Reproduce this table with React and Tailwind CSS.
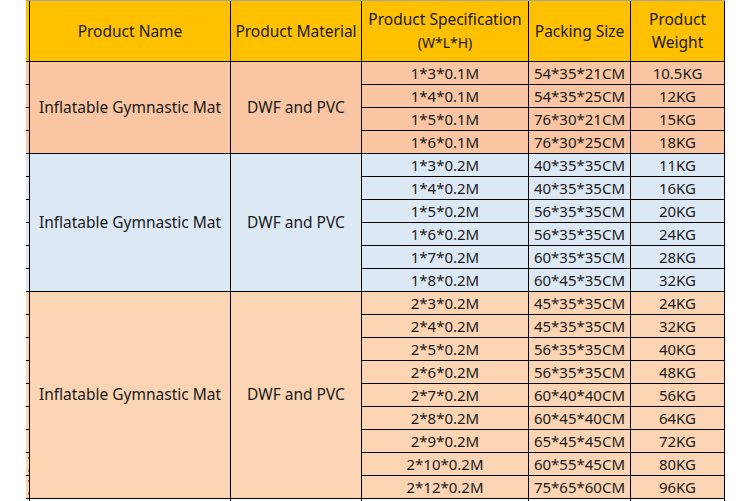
import React from 'react';

const groups = [
    {
        bg: 'bg-[#f9c5a2]',
        rows: [
            ['1*3*0.1M', '54*35*21CM', '10.5KG'],
            ['1*4*0.1M', '54*35*25CM', '12KG'],
            ['1*5*0.1M', '76*30*21CM', '15KG'],
            ['1*6*0.1M', '76*30*25CM', '18KG'],
        ],
    },
    {
        bg: 'bg-[#dde8f5]',
        rows: [
            ['1*3*0.2M', '40*35*35CM', '11KG'],
            ['1*4*0.2M', '40*35*35CM', '16KG'],
            ['1*5*0.2M', '56*35*35CM', '20KG'],
            ['1*6*0.2M', '56*35*35CM', '24KG'],
            ['1*7*0.2M', '60*35*35CM', '28KG'],
            ['1*8*0.2M', '60*45*35CM', '32KG'],
        ],
    },
    {
        bg: 'bg-[#fbd4b4]',
        rows: [
            ['2*3*0.2M', '45*35*35CM', '24KG'],
            ['2*4*0.2M', '45*35*35CM', '32KG'],
            ['2*5*0.2M', '56*35*35CM', '40KG'],
            ['2*6*0.2M', '56*35*35CM', '48KG'],
            ['2*7*0.2M', '60*40*40CM', '56KG'],
            ['2*8*0.2M', '60*45*40CM', '64KG'],
            ['2*9*0.2M', '65*45*45CM', '72KG'],
            ['2*10*0.2M', '60*55*45CM', '80KG'],
            ['2*12*0.2M', '75*65*60CM', '96KG'],
        ],
    },
];

const spans = { 4: 'row-span-4', 6: 'row-span-6', 9: 'row-span-9' };

const cell = 'flex items-center justify-center h-[22px] leading-none text-[15px]';

export default function App() {
    return (
        <div
            className="bg-white min-h-screen pl-[26px] text-[#1a1a1a] text-[15.5px]"
            style={{ fontFamily: '"Noto Sans", "Noto Sans CJK KR", sans-serif' }}
        >
            <div className="w-[699px] h-px bg-[#a6a6a6]" />
            <div className="grid grid-cols-[3px_200px_130px_166px_101px_93px] gap-px bg-black pr-px w-[699px]">
                {/* Header */}
                <div className="bg-[#ffc000] h-[60px]" />
                <div className="bg-[#ffc000] flex items-center justify-center pt-px">Product Name</div>
                <div className="bg-[#ffc000] flex items-center justify-center pt-px whitespace-nowrap">Product Material</div>
                <div className="bg-[#ffc000] flex flex-col items-center justify-center leading-[23px]">
                    <span className="whitespace-nowrap">Product Specification</span>
                    <span className="text-[14px]">(W*L*H)</span>
                </div>
                <div className="bg-[#ffc000] flex items-center justify-center pt-[2px]">Packing Size</div>
                <div className="bg-[#ffc000] flex flex-col items-center justify-center leading-[23px]">
                    <span>Product</span>
                    <span>Weight</span>
                </div>

                {/* Body */}
                {groups.map((g, gi) =>
                    g.rows.map((r, ri) => (
                        <React.Fragment key={`${gi}-${ri}`}>
                            <div className={`${g.bg} h-[22px] overflow-hidden flex items-center justify-end`}>
                                {gi === 2 && ri >= 7 && (
                                    <span className="text-[#7a2a10] -mr-[3px]">)</span>
                                )}
                            </div>
                            {ri === 0 && (
                                <>
                                    <div className={`${g.bg} ${spans[g.rows.length]} flex items-center justify-center`}>
                                        Inflatable Gymnastic Mat
                                    </div>
                                    <div className={`${g.bg} ${spans[g.rows.length]} flex items-center justify-center`}>
                                        DWF and PVC
                                    </div>
                                </>
                            )}
                            <div className={`${g.bg} ${cell}`}>{r[0]}</div>
                            <div className={`${g.bg} ${cell}`}>{r[1]}</div>
                            <div className={`${g.bg} ${cell}`}>{r[2]}</div>
                        </React.Fragment>
                    ))
                )}

                {/* next row, cut off by the window */}
                <div className="bg-white h-[22px]" />
                <div className="bg-white" />
                <div className="bg-white" />
                <div className="bg-white" />
                <div className="bg-white" />
                <div className="bg-white" />
            </div>
        </div>
    );
}
